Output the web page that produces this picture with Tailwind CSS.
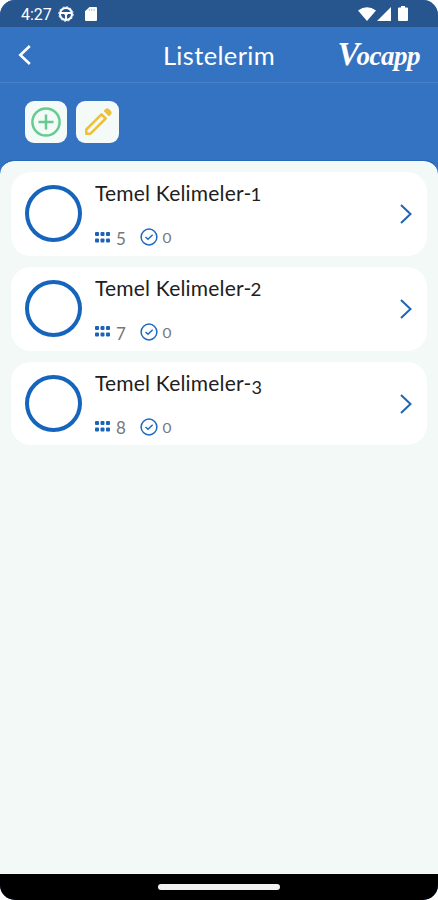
<!DOCTYPE html>
<html lang="tr">
<head>
  <meta charset="UTF-8">
  <meta name="viewport" content="width=device-width, initial-scale=1.0">
  <title>Listelerim - Vocapp</title>
  <script src="https://cdn.jsdelivr.net/npm/@tailwindcss/browser@4"></script>
</head>
<body class="bg-white font-['Lato',sans-serif]">
  <div class="w-[438px] h-[900px] flex flex-col overflow-hidden rounded-[15px] bg-[#3473c2]">

    <!-- Durum çubuğu -->
    <div class="h-[27px] shrink-0 flex items-center bg-[#27568f] pl-[21px] pr-[30px] text-white">
      <span class="w-[37px] font-['Roboto',sans-serif] text-[16px] leading-none pt-[3px] whitespace-nowrap">4:27</span>
      <svg class="w-4 h-4" viewBox="0 0 16 16" fill="none" stroke="#fff">
        <circle cx="8" cy="8" r="6" stroke-width="2" />
        <circle cx="8" cy="8" r="7.2" stroke-width="1" stroke-dasharray="2 1.77" />
        <path d="M2.5 7h11M8 8v5.5" stroke-width="2" />
        <path d="M5.5 6.5h5L8 10z" fill="#fff" />
      </svg>
      <svg class="w-3 h-[14px] mt-px ml-[11px]" viewBox="0 0 12 15" preserveAspectRatio="none">
        <path d="M4.5 0H11q1 0 1 1v13q0 1-1 1H1q-1 0-1-1V4.5z" fill="#fff" />
        <path d="M4.3 2v2.2M6.7 2v2.2M9.1 2v2.2" stroke="#7f9cc0" stroke-width=".7" />
      </svg>
      <svg class="w-[18px] h-[14px] ml-auto" viewBox="0 0 18 14" fill="#fff">
        <path d="M0 3.5Q9-3 18 3.5L9 14z" />
      </svg>
      <svg class="w-[14px] h-[14px] ml-px" viewBox="0 0 14 14" fill="#fff">
        <path d="M14 0v14H0z" />
      </svg>
      <svg class="w-[10px] h-[15px] ml-[7px]" viewBox="0 0 10 15" fill="#fff">
        <path d="M3 0h4v1.5h2q1 0 1 1V14q0 1-1 1H1q-1 0-1-1V2.500q0-1 1-1h2z" />
      </svg>
    </div>

    <!-- Başlık -->
    <header class="h-14 shrink-0 grid grid-cols-[1fr_auto_1fr] items-center border-b border-[#477fcb] px-[18px] text-white">
      <svg class="w-[13px] h-5" viewBox="0 0 13 20" fill="none" stroke="#fff" stroke-width="2.6">
        <path d="M11.800 1L2.300 10l9.500 9" />
      </svg>
      <h1 class="text-[25.500px] leading-none tracking-[0.35px] pt-[2px]">Listelerim</h1>
      <span class="justify-self-end font-['Liberation_Serif',serif] font-bold italic leading-none whitespace-nowrap"><span class="text-[33px] tracking-[-3px]">V</span><span class="text-[27px] tracking-[-0.5px]">ocapp</span></span>
    </header>

    <!-- Ekle / düzenle -->
    <div class="h-[77px] shrink-0 flex gap-[9px] pl-[25px] pt-[18px]">
      <button class="w-[42px] h-[42px] rounded-[9px] bg-[#f3faf8] flex items-center justify-center">
        <svg class="w-[30px] h-[30px]" viewBox="0 0 30 30" fill="none" stroke="#65cc91" stroke-width="2.500">
          <circle cx="15" cy="15" r="13.600" />
          <path d="M15 7.500v15M7.500 15h15" />
        </svg>
      </button>
      <button class="w-[43px] h-[42px] rounded-[9px] bg-[#f3faf8] flex items-center justify-center">
        <svg class="w-7 h-7" viewBox="0 0 28 28" fill="none" stroke="#edc03c" stroke-width="2.500" stroke-linejoin="round">
          <path d="M2.300 21.500L17.500 6.300l4.200 4.200L6.500 25.700H2.300z" />
          <path d="M21 3l1.200-1.200q1-.8 2 0l2 2q.8 1 0 2L25 7z" fill="#edc03c" stroke-width="2" />
        </svg>
      </button>
    </div>

    <main class="flex-1 bg-[#1d62b9] rounded-t-[14px]">
      <div id="lists" class="h-full flex flex-col gap-[11px] rounded-t-[14px] border-t border-[#2868ba] bg-[#f2f9f7] bg-clip-padding px-[11px] pt-[11px]"></div>
    </main>

    <div class="h-[26px] shrink-0 bg-black flex justify-center pt-[10px]">
      <div class="w-[122px] h-[6px] rounded-full bg-[#f2f2f2]"></div>
    </div>
  </div>

  <script>
    const lists = [
      { no: 1, words: 5, learned: 0 },
      { no: 2, words: 7, learned: 0 },
      { no: 3, words: 8, learned: 0 },
    ];

    // Eski stil rakamlar: 0-2 kısa, 3/4/5/7/9 satırın altına iner, 6/8 tam boy
    const short = n => n <= 2;
    const drops = n => [3, 4, 5, 7, 9].includes(n);

    document.getElementById('lists').innerHTML = lists.map(item => `
      <div class="h-[83.8px] shrink-0 flex rounded-[20px] bg-white pl-[14px] pr-[15px]">
        <div class="w-[57px] h-[57px] mt-[13px] shrink-0 rounded-full border-4 border-[#1665bd]"></div>
        <div class="ml-[13px] flex-1">
          <h2 class="h-7 mt-[7px] text-[21px] leading-7 tracking-[0.2px] text-[#202020] whitespace-nowrap">Temel Kelimeler-<span class="inline-block ${short(item.no) ? 'text-[17px] scale-x-110' : 'text-[18px] translate-y-[3px]'}">${item.no}</span></h2>
          <div class="flex items-center h-5 mt-[20px] text-[#777]">
            <svg class="w-[15px] h-[11px]" viewBox="0 0 15 11" fill="#1b63b8">
              <rect x="0" y="0" width="4" height="4" rx="1" /><rect x="5.500" y="0" width="4" height="4" rx="1" /><rect x="11" y="0" width="4" height="4" rx="1" />
              <rect x="0" y="6.500" width="4" height="4" rx="1" /><rect x="5.500" y="6.500" width="4" height="4" rx="1" /><rect x="11" y="6.500" width="4" height="4" rx="1" />
            </svg>
            <span class="w-[10px] ml-[6px] text-[17px] leading-5 ${drops(item.words) ? 'translate-y-[2px]' : 'translate-y-px'}">${item.words}</span>
            <svg class="w-[18px] h-[18px] ml-[14px]" viewBox="0 0 18 18" fill="none" stroke="#2069bb" stroke-width="1.500">
              <circle cx="9" cy="9" r="7.900" />
              <path d="M5.500 9l2.500 2.300 4.700-4.500" />
            </svg>
            <span class="ml-[5px] text-[14px] leading-5 scale-x-110 translate-y-px">${item.learned}</span>
          </div>
        </div>
        <svg class="w-3 h-5 mt-[32px]" viewBox="0 0 12 20" fill="none" stroke="#1d65b5" stroke-width="2">
          <path d="M1 1l9.500 9L1 19" />
        </svg>
      </div>
    `).join('');
  </script>
</body>
</html>
